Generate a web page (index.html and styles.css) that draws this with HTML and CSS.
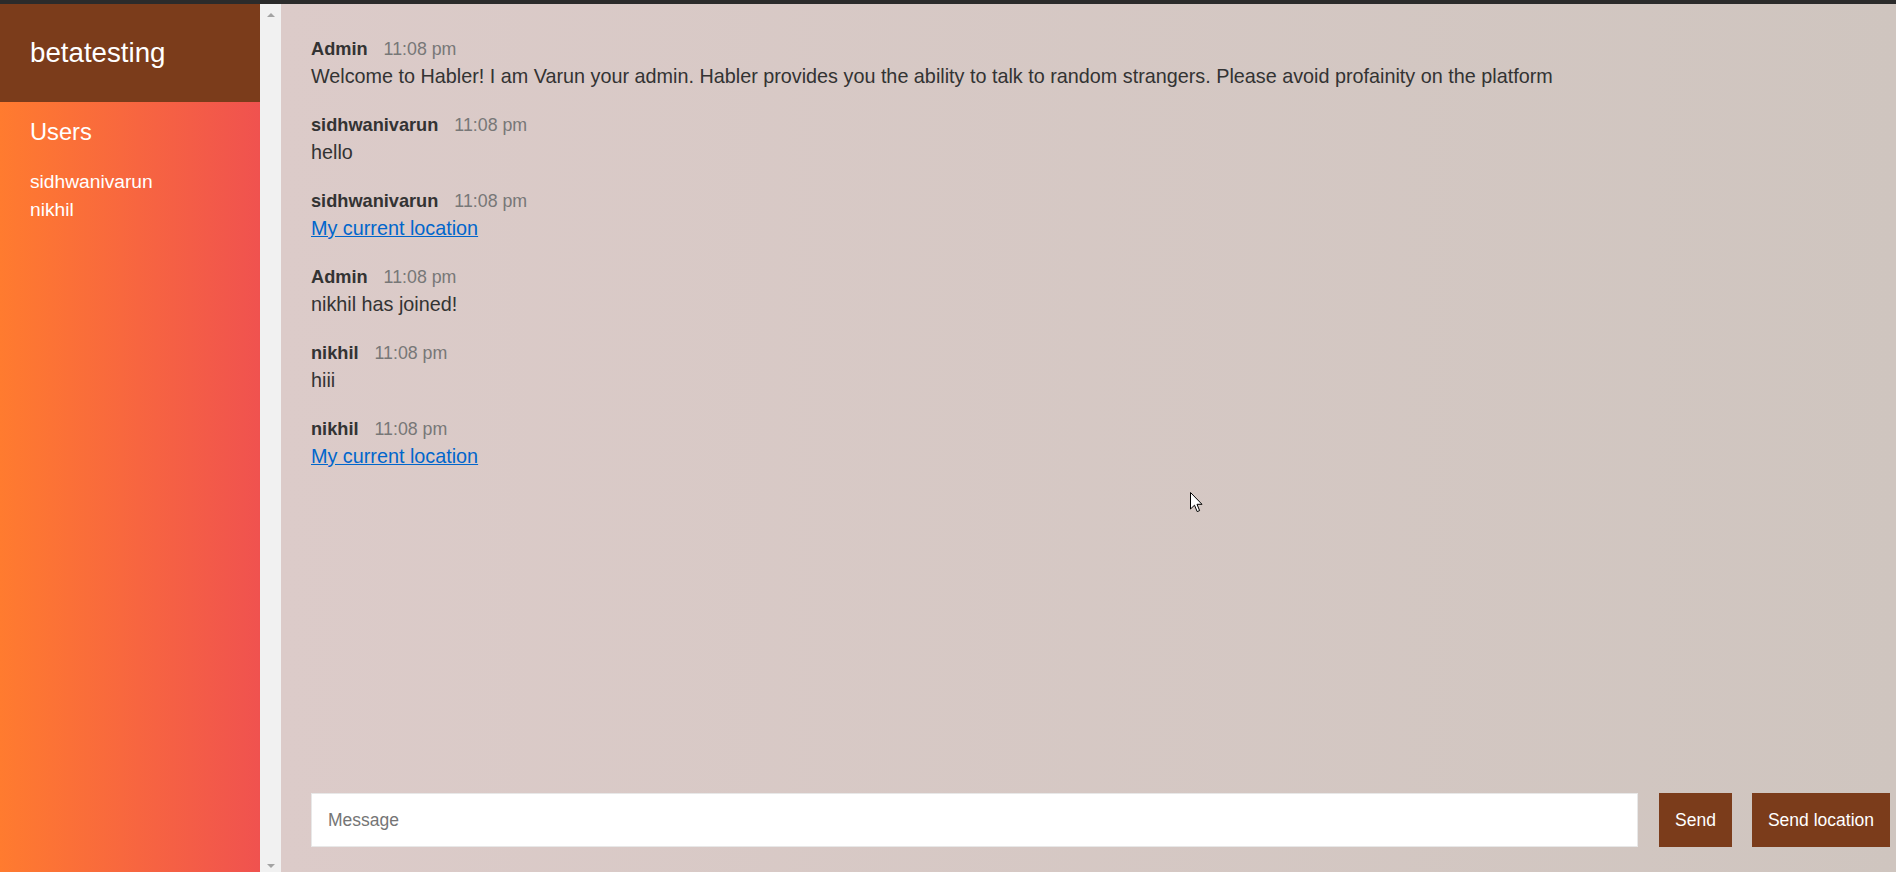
FILE: index.html
```
<!DOCTYPE html>
<html lang="en">
<head>
<meta charset="utf-8">
<title>Chat | betatesting</title>
<link rel="stylesheet" href="styles.css">
</head>
<body>
<div class="topbar"></div>
<div class="app">
  <aside class="sidebar">
    <div class="room">betatesting</div>
    <h3 class="users-title">Users</h3>
    <ol class="users">
      <li>sidhwanivarun</li>
      <li>nikhil</li>
    </ol>
  </aside>
  <div class="scrollbar">
    <span class="arrow up"></span>
    <span class="arrow down"></span>
  </div>
  <main class="chat">
    <ol class="messages">
      <li class="message">
        <div class="meta"><span class="name">Admin</span><span class="time">11:08 pm</span></div>
        <p class="text">Welcome to Habler! I am Varun your admin. Habler provides you the ability to talk to random strangers. Please avoid profainity on the platform</p>
      </li>
      <li class="message">
        <div class="meta"><span class="name">sidhwanivarun</span><span class="time">11:08 pm</span></div>
        <p class="text">hello</p>
      </li>
      <li class="message">
        <div class="meta"><span class="name">sidhwanivarun</span><span class="time">11:08 pm</span></div>
        <p class="text"><a href="#">My current location</a></p>
      </li>
      <li class="message">
        <div class="meta"><span class="name">Admin</span><span class="time">11:08 pm</span></div>
        <p class="text">nikhil has joined!</p>
      </li>
      <li class="message">
        <div class="meta"><span class="name">nikhil</span><span class="time">11:08 pm</span></div>
        <p class="text">hiii</p>
      </li>
      <li class="message">
        <div class="meta"><span class="name">nikhil</span><span class="time">11:08 pm</span></div>
        <p class="text"><a href="#">My current location</a></p>
      </li>
    </ol>
    <form class="compose" onsubmit="return false">
      <input class="input" type="text" placeholder="Message">
      <button class="btn" type="button">Send</button>
      <button class="btn" type="button">Send location</button>
    </form>
  </main>
</div>
<svg class="cursor" width="13" height="21" viewBox="0 0 13 21">
  <path d="M0.5 0.5 L0.5 17 L4.5 13.2 L7.2 19.6 L9.6 18.6 L7 12.3 L12 12.3 Z" fill="#fff" stroke="#000" stroke-width="1" stroke-linejoin="miter"/>
</svg>
</body>
</html>
```
FILE: styles.css
```
* { box-sizing: border-box; }
html, body { margin: 0; padding: 0; }
body {
  font-family: "Liberation Sans", Arial, sans-serif;
  width: 1896px;
  height: 872px;
  overflow: hidden;
  position: relative;
  background: #dccbc9;
}
.topbar { height: 4px; background: #2b2b2b; }
.app { display: flex; height: 868px; }

.sidebar {
  width: 260px;
  flex: none;
  display: flex;
  flex-direction: column;
  background: linear-gradient(to right, #ff7b2f 0%, #f0524f 100%);
  color: #fff;
}
.room {
  height: 98px;
  background: #7b3c1b;
  display: flex;
  align-items: center;
  padding-left: 30px;
  font-size: 27.7px;
  font-weight: 400;
}
.users-title {
  margin: 16px 0 0;
  padding-left: 30px;
  font-size: 23.7px;
  line-height: 28px;
  font-weight: 400;
}
.users {
  list-style: none;
  margin: 22px 0 0;
  padding: 0 0 0 30px;
  font-size: 19.2px;
  line-height: 28px;
}

.scrollbar {
  width: 21px;
  flex: none;
  background: #f1f1f1;
  display: flex;
  flex-direction: column;
  justify-content: space-between;
  align-items: center;
  padding: 9px 0 4px;
}
.arrow { width: 0; height: 0; border-left: 4.5px solid transparent; border-right: 4.5px solid transparent; }
.arrow.up { border-bottom: 4.5px solid #a3a3a3; }
.arrow.down { border-top: 4.5px solid #a3a3a3; }

.chat {
  flex: 1;
  display: flex;
  flex-direction: column;
  background: linear-gradient(to right, #dccbc9 0%, #cfc5bf 100%);
}
.messages {
  list-style: none;
  margin: 0;
  padding: 33px 30px 0 30px;
}
.message { margin-bottom: 23px; }
.meta { height: 25px; line-height: 24px; font-size: 17.5px; white-space: nowrap; }
.name { font-weight: 700; color: #333; margin-right: 16px; font-size: 18.2px; }
.time { color: #777; font-size: 17.8px; }
.text { margin: 0; font-size: 19.8px; line-height: 28px; color: #333; }
.text a { color: #0066cc; text-decoration: underline; }

.compose {
  margin: auto 0 0;
  display: flex;
  gap: 20px;
  padding: 0 6px 25px 30px;
}
.input {
  flex: 1;
  height: 54px;
  border: 1px solid #e8e8e8;
  background: #fff;
  padding: 0 16px;
  font-family: inherit;
  font-size: 17.5px;
  color: #333;
  outline: none;
  margin-right: 1px;
}
.input::placeholder { color: #757575; }
.btn {
  height: 54px;
  border: none;
  background: #7b3c1b;
  color: #fff;
  font-family: inherit;
  font-size: 17.5px;
  padding: 0 16px;
  cursor: pointer;
}
.cursor { position: absolute; left: 1190px; top: 492px; }
```
